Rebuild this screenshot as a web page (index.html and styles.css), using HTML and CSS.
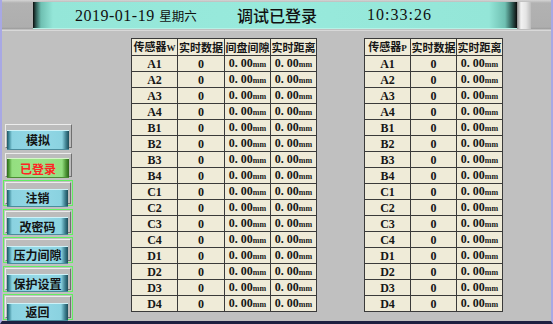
FILE: index.html
```html
<!DOCTYPE html>
<html lang="zh-CN">
<head>
  <meta charset="UTF-8" />
  <meta name="viewport" content="width=device-width, initial-scale=1.0"/>
  <title>调试已登录</title>
  <link rel="stylesheet" href="styles.css">
</head>
<body>
  <div class="screen">
    <header class="topbar">
      <div class="banner">
        <span class="date">2019-01-19 <small>星期六</small></span>
        <span class="title">调试已登录</span>
        <span class="time">10:33:26</span>
      </div>
      <div class="cap"></div>
    </header>

    <main class="content">
      <nav class="menu">
        <div class="item plain"><div class="bevel"><button class="btn">模拟</button></div></div>
        <div class="item plain"><div class="bevel"><button class="btn on">已登录</button></div></div>
        <div class="item"><div class="bevel"><button class="btn">注销</button></div></div>
        <div class="item"><div class="bevel"><button class="btn">改密码</button></div></div>
        <div class="item"><div class="bevel"><button class="btn">压力间隙</button></div></div>
        <div class="item"><div class="bevel"><button class="btn">保护设置</button></div></div>
        <div class="item"><div class="bevel"><button class="btn">返回</button></div></div>
      </nav>

      <table class="grid grid-w" id="tableW">
        <tr class="head"><th>传感器<small>W</small></th><th>实时数据</th><th>间盘间隙</th><th>实时距离</th></tr>
      </table>

      <table class="grid grid-p" id="tableP">
        <tr class="head"><th>传感器<small>P</small></th><th>实时数据</th><th>实时距离</th></tr>
      </table>
    </main>
  </div>

  <script>
    const sensors = ['A', 'B', 'C', 'D'];

    function mm(value) {
      return '<td>' + value + '<span class="unit">mm</span></td>';
    }

    function fillTable(id, extraCols) {
      const table = document.getElementById(id);
      sensors.forEach(function (group) {
        for (let i = 1; i <= 4; i++) {
          let row = '<td>' + group + i + '</td><td>0</td>';
          for (let c = 0; c < extraCols; c++) row += mm('0.&nbsp;00');
          table.insertAdjacentHTML('beforeend', '<tr>' + row + '</tr>');
        }
      });
    }

    fillTable('tableW', 2);
    fillTable('tableP', 1);
  </script>
</body>
</html>
```

FILE: styles.css
```css
* {
  box-sizing: border-box;
}

body {
  margin: 0;
  background: #c0c0c0;
  font-family: "Noto Sans CJK SC", sans-serif;
}

.screen {
  width: 553px;
  height: 324px;
  overflow: hidden;
  border-left: 2px solid #a8a8e4;
  border-right: 2px solid #a8a8e4;
  border-bottom: 3px solid #1e2040;
  background: #c0c0c0;
  display: flex;
  flex-direction: column;
}

/* top title bar */
.topbar {
  height: 31px;
  flex-shrink: 0;
  display: flex;
  padding: 2px 0 0 31px;
  background: linear-gradient(to bottom, #d4d4d4 0, #b2b2b2 3px, #aeaeae 27px, #9c9c9c 29px, #e2e2e2 30px, #d0d0d0 31px);
  border-bottom: 1px solid #d8d8d8;
}

.banner {
  width: 484px;
  height: 27px;
  display: flex;
  align-items: center;
  padding-left: 42px;
  color: #111;
  border-bottom: 1px solid #b6f2e6;
  background: linear-gradient(to right, #0c0c0c 0, #2e5a54 3px, #6fc0b2 8px, #94e6d8 20px, #98eadc 50%, #94e6d8 calc(100% - 28px), #6fc0b2 calc(100% - 12px), #2e5a54 calc(100% - 5px), #0c0c0c 100%);
}

.cap {
  width: 14px;
  height: 27px;
  background: linear-gradient(to right, #8a8a8a 0, #f2f2f2 4px, #e4e4e4 9px, #bcbcbc 14px);
}

.date,
.time {
  font-family: "Liberation Serif", serif;
  font-size: 16px;
  letter-spacing: 0.5px;
}

.date {
  width: 162px;
}

.date small {
  font-family: "Noto Sans CJK SC", sans-serif;
  font-size: 12.5px;
  letter-spacing: 0;
}

.title {
  width: 130px;
  font-size: 16px;
  font-weight: 500;
}

.time {
  letter-spacing: 1px;
}

/* body */
.content {
  flex: 1;
  min-height: 0;
  display: flex;
  align-items: flex-start;
  padding: 7px 0 0 1px;
}

.menu {
  width: 70px;
  flex-shrink: 0;
  align-self: flex-end;
  margin-bottom: 1px;
  display: flex;
  flex-direction: column;
  gap: 2.5px;
}

.item {
  height: 26px;
  flex-shrink: 0;
  padding: 1px;
  border: 1px solid #62ee62;
}

.item.plain {
  border-color: transparent;
  padding: 0 0 0 1px;
}

.bevel {
  height: 100%;
  padding: 1px 2px 1px 1px;
  border: 1px solid;
  border-color: #ececec #707070 #707070 #ececec;
  background: #bcbcbc;
}

.btn {
  width: 100%;
  height: 100%;
  border: 0;
  padding: 0;
  font-family: "Noto Sans CJK SC", sans-serif;
  font-size: 12px;
  font-weight: 700;
  color: #141414;
  background: linear-gradient(to right, #1c5462 0, #3e8a9a 2px, #8ad2e0 5px, #94d8e6 50%, #8ad2e0 calc(100% - 7px), #3e8090 calc(100% - 3px), #1c4c58 100%);
  box-shadow: inset 0 1px 0 #cdf2f8, inset 0 -1px 0 #4a8c9c;
}

.btn.on {
  color: #ff2424;
  background: linear-gradient(to right, #2a6a18 0, #4e9a36 2px, #94de80 5px, #9ce488 50%, #94de80 calc(100% - 7px), #4c9434 calc(100% - 3px), #2a6018 100%);
  box-shadow: inset 0 1px 0 #d4f6c8, inset 0 -1px 0 #4c8c34;
}

/* data tables */
.grid {
  flex-shrink: 0;
  border-collapse: collapse;
  background: #efebd8;
  color: #161616;
}

.grid-w {
  margin-left: 58px;
}

.grid-p {
  margin-left: 47px;
}

.grid th,
.grid td {
  height: 16px;
  padding: 0;
  border: 1px solid #3a3a3a;
  text-align: center;
  white-space: nowrap;
  line-height: 12px;
  width: 46px;
}

.grid th {
  height: 17px;
  font-size: 11px;
  font-weight: 700;
}

.grid th small {
  font-family: "Liberation Serif", serif;
  font-size: 9px;
}

.grid td {
  font-family: "Liberation Serif", serif;
  font-size: 12px;
  font-weight: 700;
}

.grid-w th:nth-child(2),
.grid-w td:nth-child(2) {
  width: 47px;
}

.unit {
  font-size: 8px;
}
```
